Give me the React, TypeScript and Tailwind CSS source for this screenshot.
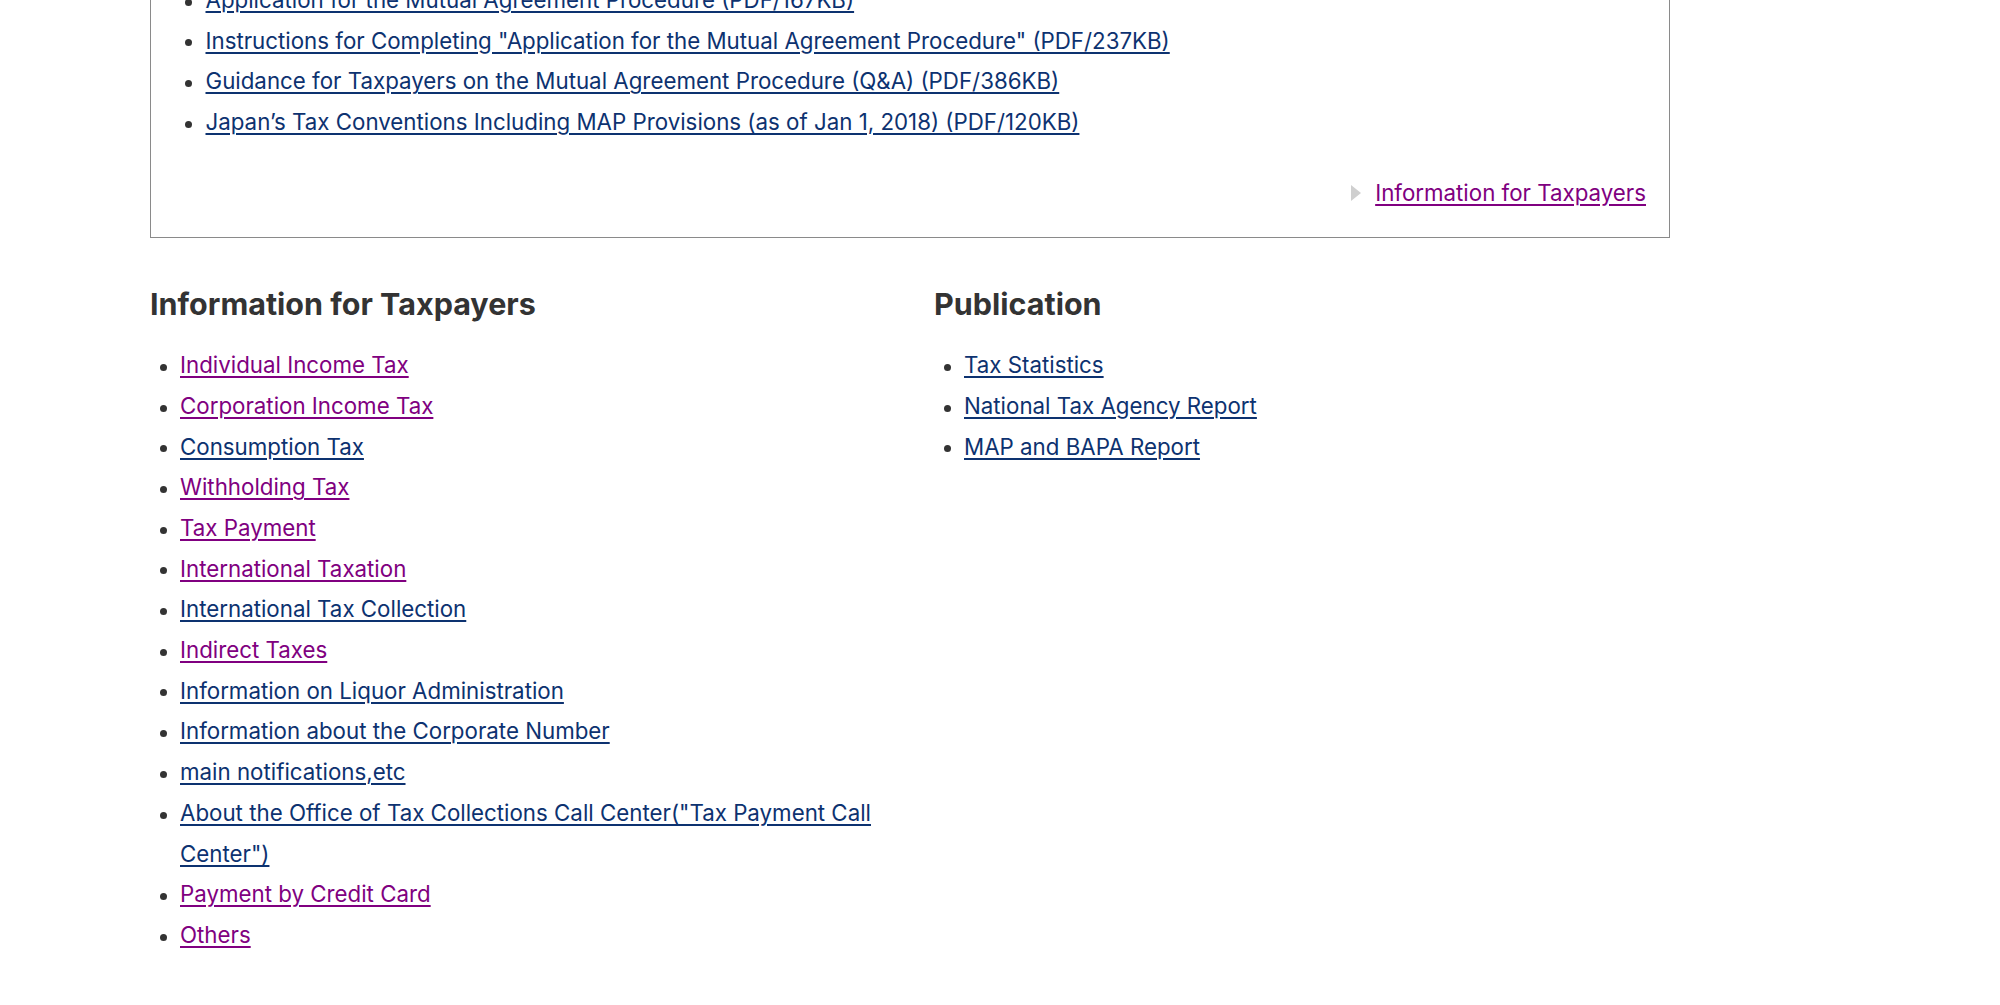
const boxLinks = [
  'Application for the Mutual Agreement Procedure (PDF/167KB)',
  'Instructions for Completing "Application for the Mutual Agreement Procedure" (PDF/237KB)',
  'Guidance for Taxpayers on the Mutual Agreement Procedure (Q&A) (PDF/386KB)',
  "Japan\u2019s Tax Conventions Including MAP Provisions (as of Jan 1, 2018) (PDF/120KB)",
];

// visited: true renders in purple like the browser's visited links
const taxpayerLinks: { label: string; visited: boolean }[] = [
  { label: 'Individual Income Tax', visited: true },
  { label: 'Corporation Income Tax', visited: true },
  { label: 'Consumption Tax', visited: false },
  { label: 'Withholding Tax', visited: true },
  { label: 'Tax Payment', visited: true },
  { label: 'International Taxation', visited: true },
  { label: 'International Tax Collection', visited: false },
  { label: 'Indirect Taxes', visited: true },
  { label: 'Information on Liquor Administration', visited: false },
  { label: 'Information about the Corporate Number', visited: false },
  { label: 'main notifications,etc', visited: false },
  { label: 'About the Office of Tax Collections Call Center("Tax Payment Call Center")', visited: false },
  { label: 'Payment by Credit Card', visited: true },
  { label: 'Others', visited: true },
];

const publicationLinks = ['Tax Statistics', 'National Tax Agency Report', 'MAP and BAPA Report'];

function BulletItem({ label, visited }: { label: string; visited?: boolean }) {
  return (
    <li className="flex items-start">
      <span className="mt-[18.7px] w-[7px] h-[7px] rounded-full bg-[#333] shrink-0" />
      <a
        href="#"
        className={`ml-[13.5px] underline decoration-[1.5px] underline-offset-[3px] ${
          visited ? 'text-[#800080]' : 'text-[#0d3270]'
        }`}
      >
        {label}
      </a>
    </li>
  );
}

export default function App() {
  return (
    <div className="min-h-[1005px] bg-white overflow-hidden font-['Inter','Noto_Sans',sans-serif] text-[22.3px] leading-[40.7px] text-[#333]">
      <div className="w-[1520px] ml-[150px]">
        {/* MAP documents box (scrolled partly out of view) */}
        <div className="-mt-[21px] border border-[#8a8a8a] pl-[34px] pr-[23px] pb-[23px]">
          <ul>
            {boxLinks.map((l) => (
              <BulletItem key={l} label={l} />
            ))}
          </ul>
          <div className="mt-[30px] flex justify-end items-center">
            <svg width="10" height="16" viewBox="0 0 10 16" className="mr-[14px]">
              <path d="M0 0 L10 8 L0 16 Z" fill="#cfcfcf" />
            </svg>
            <a href="#" className="text-[#800080] underline decoration-[1.5px] underline-offset-[3px]">
              Information for Taxpayers
            </a>
          </div>
        </div>

        <div className="mt-[48px] grid grid-cols-[760px_1fr] gap-x-[24px]">
          <section>
            <h2 className="text-[30.5px] leading-[36.6px] font-bold text-[#333]">Information for Taxpayers</h2>
            <ul className="mt-[23px] pl-[9.5px]">
              {taxpayerLinks.map((l) => (
                <BulletItem key={l.label} label={l.label} visited={l.visited} />
              ))}
            </ul>
          </section>
          <section>
            <h2 className="text-[30.5px] leading-[36.6px] font-bold text-[#333]">Publication</h2>
            <ul className="mt-[23px] pl-[9.5px]">
              {publicationLinks.map((l) => (
                <BulletItem key={l} label={l} />
              ))}
            </ul>
          </section>
        </div>
      </div>
    </div>
  );
}
